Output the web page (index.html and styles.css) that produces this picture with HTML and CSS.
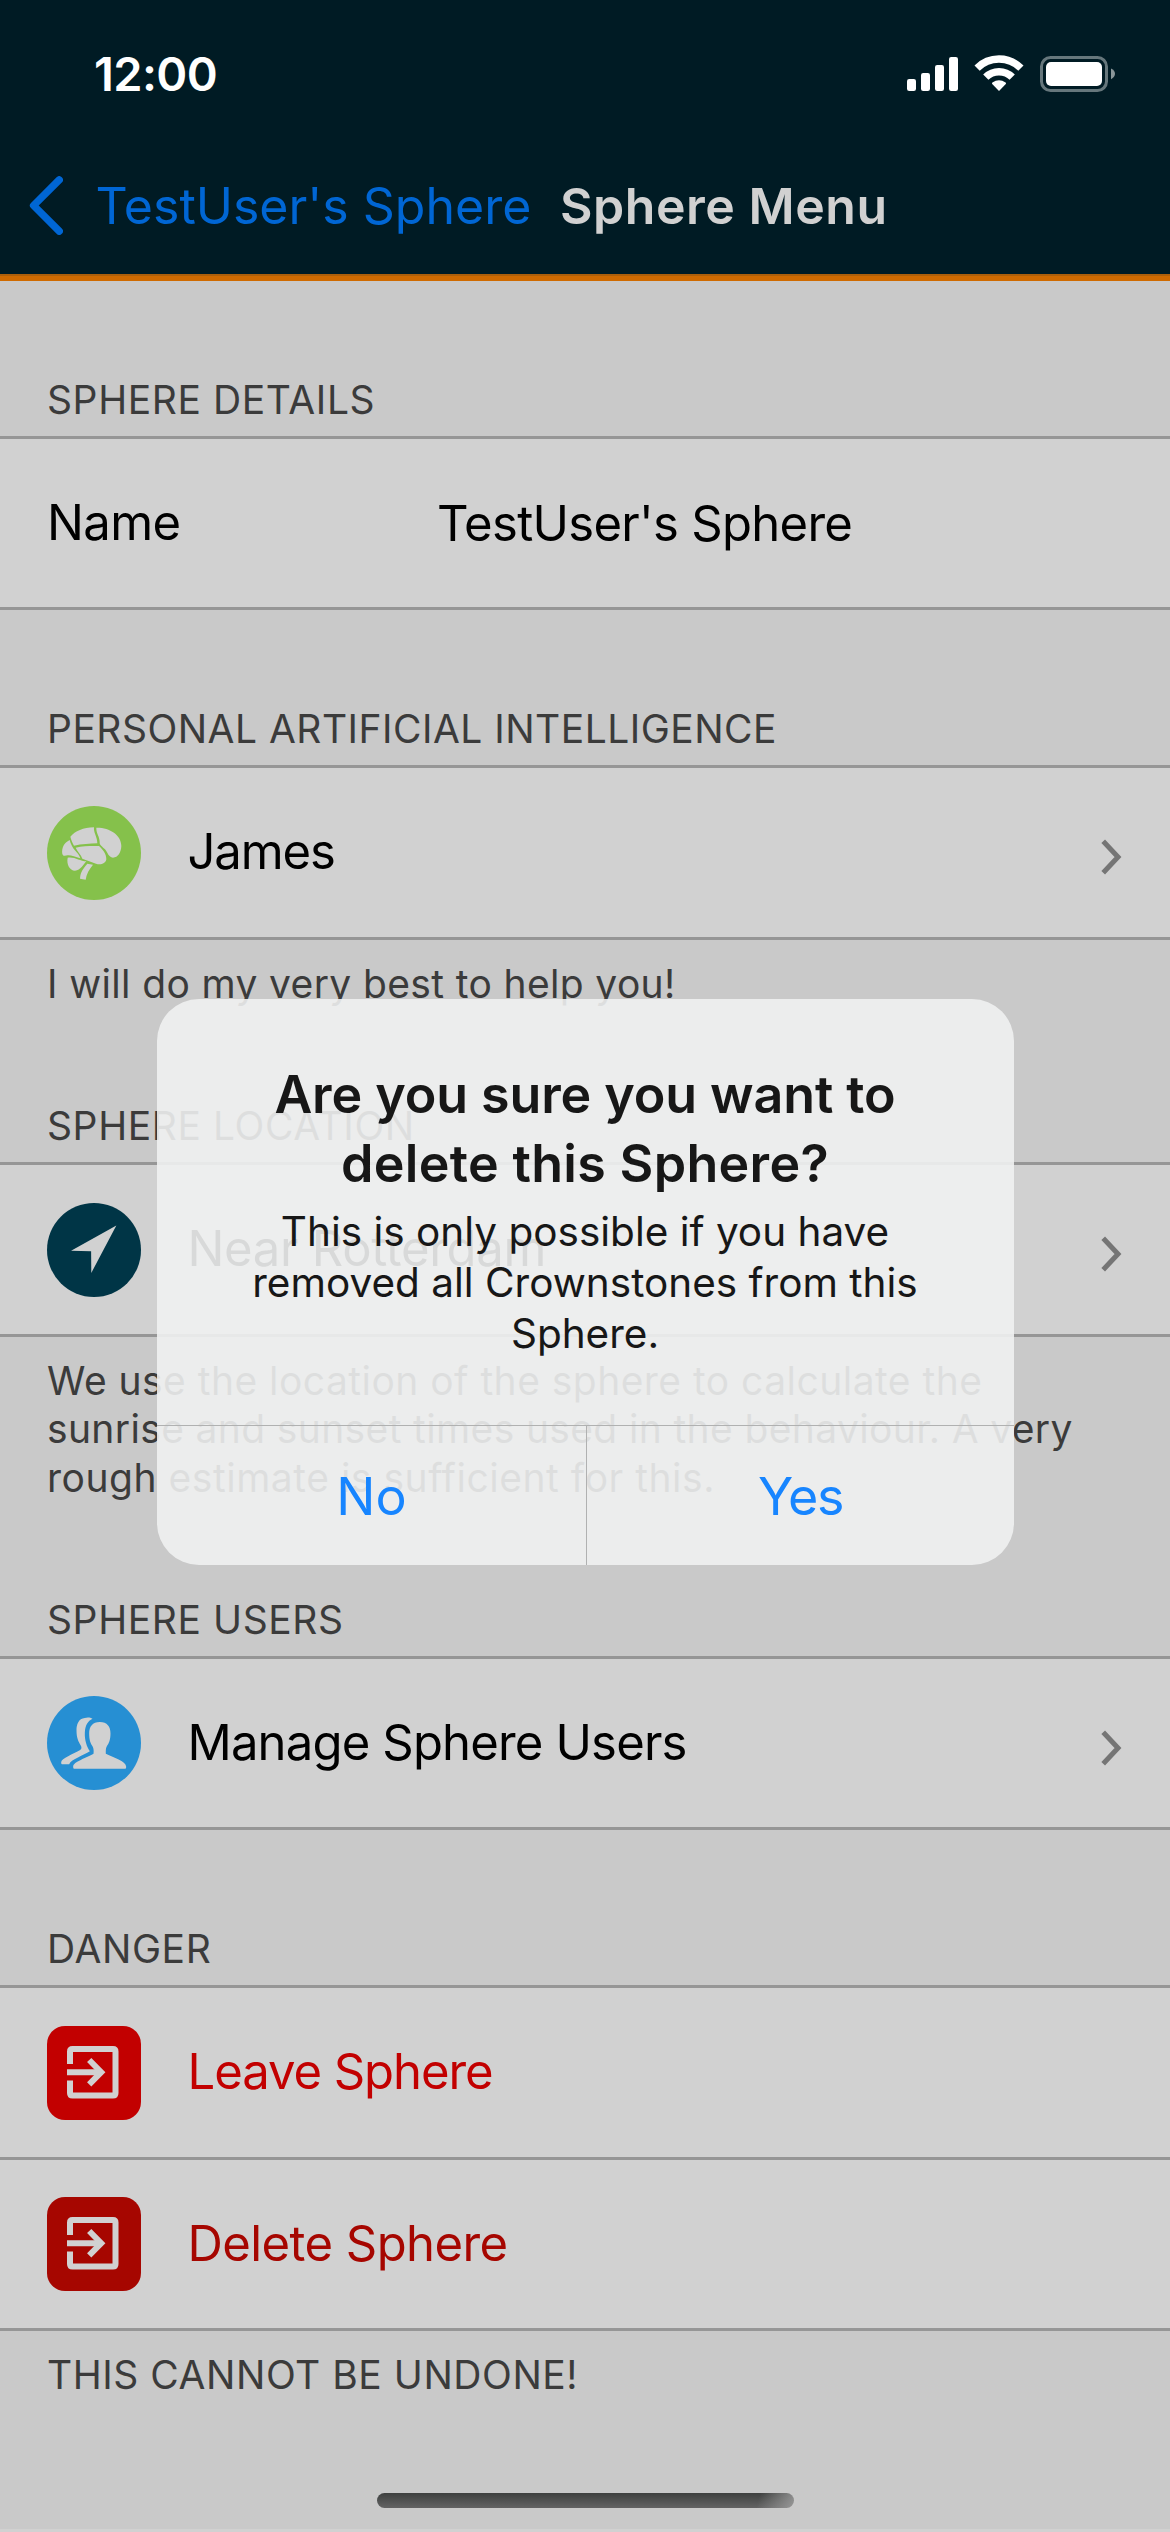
FILE: index.html
```html
<!DOCTYPE html>
<html lang="en">
<head>
<meta charset="utf-8">
<title>Sphere Menu</title>
<link rel="stylesheet" href="styles.css">
</head>
<body>
<div class="screen">
  <header class="header">
    <div class="status">
      <span class="status-time">12:00</span>
      <svg class="status-icons" viewBox="907 55 208 37" aria-hidden="true">
        <g fill="#fff">
          <rect x="907" y="79" width="9" height="12" rx="2.2"/>
          <rect x="921" y="73" width="9" height="18" rx="2.2"/>
          <rect x="935" y="65" width="9" height="26" rx="2.2"/>
          <rect x="949" y="57" width="9" height="34" rx="2.2"/>
          <path d="M999 91 L992.2 84 Q991.6 83.2 992.4 82.6 Q999 78 1005.6 82.6 Q1006.4 83.2 1005.8 84 Z"/>
          <rect x="1046" y="62" width="56" height="24" rx="5"/>
        </g>
        <g fill="none" stroke="#fff" stroke-width="7.4">
          <path d="M977.1 68.1 A31 31 0 0 1 1020.9 68.1"/>
          <path d="M985.8 77.2 A18.6 18.6 0 0 1 1012.2 77.2"/>
        </g>
        <rect x="1041.5" y="57.5" width="65" height="33" rx="9" fill="none" stroke="#66777c" stroke-width="3"/>
        <path d="M1111 68.5 Q1115 70.5 1115 73.8 Q1115 77 1111 79.2 Z" fill="#8a9699"/>
      </svg>
    </div>
    <nav class="nav">
      <svg class="nav-chevron" viewBox="0 0 34 59" aria-hidden="true"><path d="M30.2 3.9 L4.6 29.5 L30.2 55.1" fill="none" stroke="#0066d4" stroke-width="7.4" stroke-linecap="round" stroke-linejoin="round"/></svg>
      <span class="nav-back">TestUser's Sphere</span>
      <h1 class="nav-title">Sphere Menu</h1>
    </nav>
  </header>

  <main class="list">
    <h2 class="heading">SPHERE DETAILS</h2>
    <div class="rows">
      <div class="row">
        <span class="label name">Name</span>
        <span class="label value">TestUser's Sphere</span>
      </div>
    </div>

    <h2 class="heading ai">PERSONAL ARTIFICIAL INTELLIGENCE</h2>
    <div class="rows">
      <div class="row tall">
        <svg class="icon" viewBox="141 76 282 282" aria-hidden="true">
          <circle cx="282" cy="217" r="141" fill="#85c14b"/>
          <g fill="#d1d1d1">
            <path d="M211 168 C225 152 250 140 282 140 C280 156 292 168 292 188 C270 189 245 190 222 195 C218 187 213 177 211 168Z"/>
            <path d="M289 141 C328 140 364 162 364 196 C363 216 354 230 339 231 C325 230 323 215 315 206 C308 198 299 194 299 186 C300 168 288 158 289 141Z"/>
            <path d="M209 178 C212 190 218 202 226 210 C232 217 239 224 241 233 C226 229 213 223 203 224 C195 226 189 227 187 220 C184 203 192 186 209 178Z"/>
            <path d="M227 201 C250 195 280 196 297 196 C308 206 319 219 319 236 C317 250 300 254 288 249 C275 243 260 240 247 234 C243 222 232 212 227 201Z"/>
            <path d="M203 231 C225 228 240 242 259 242 C250 252 242 269 225 270 C209 270 199 250 203 231Z"/>
            <path d="M262 249 L279 252 C268 265 259 280 257 297 L240 294 C242 277 243 271 262 249Z"/>
          </g>
        </svg>
        <span class="label james">James</span>
        <svg class="chevron" viewBox="0 0 21 36" aria-hidden="true"><path d="M2.2 2.2 L17 18 L2.2 33.8" fill="none" stroke="#757575" stroke-width="5"/></svg>
      </div>
    </div>
    <p class="note note-ai">I will do my very best to help you!</p>

    <h2 class="heading">SPHERE LOCATION</h2>
    <div class="rows">
      <div class="row tall">
        <svg class="icon" viewBox="123.5 582 244 244" aria-hidden="true">
          <circle cx="245.5" cy="704" r="122" fill="#003546"/>
          <path d="M303.5 640.5 L186 706 L238 707 L238.5 763.5Z" fill="#d1d1d1"/>
        </svg>
        <span class="label near">Near Rotterdam</span>
        <svg class="chevron" viewBox="0 0 21 36" aria-hidden="true"><path d="M2.2 2.2 L17 18 L2.2 33.8" fill="none" stroke="#757575" stroke-width="5"/></svg>
      </div>
    </div>
    <p class="note note-location"><span class="line-first">We use the location of the sphere to calculate the</span><br>sunrise and sunset times used in the behaviour. A very<br><span class="line-last">rough estimate is sufficient for this.</span></p>

    <h2 class="heading">SPHERE USERS</h2>
    <div class="rows">
      <div class="row">
        <svg class="icon" viewBox="20.5 18 282 282" aria-hidden="true">
          <circle cx="161.5" cy="159" r="141" fill="#268fd3"/>
          <g fill="#d1d1d1">
            <path d="M179 96 C201 96 211 110 211 130 C211 150 206 160 200 169 C196 176 197 184 197 191 C222 204 258 213 258 230 C258 235 257 236 252 236 L105 236 C100 236 99 235 99 230 C99 214 140 204 160 191 C161 184 161 176 157 169 C151 160 147 150 147 130 C147 110 157 96 179 96Z"/>
            <path d="M157 86 C151 82 141 81 134 84 C115 86 109 103 109 121 C109 145 115 155 121 165 C125 172 125 177 120 180 C100 192 63 205 63 217 C63 222 64 223 68 223 L87 223 C94 207 130 197 149 184 C140 170 133 150 134 128 C135 105 143 93 157 86Z"/>
          </g>
        </svg>
        <span class="label manage">Manage Sphere Users</span>
        <svg class="chevron" viewBox="0 0 21 36" aria-hidden="true"><path d="M2.2 2.2 L17 18 L2.2 33.8" fill="none" stroke="#757575" stroke-width="5"/></svg>
      </div>
    </div>

    <h2 class="heading">DANGER</h2>
    <div class="rows">
      <div class="row tall">
        <svg class="icon" viewBox="0 0 94 94" aria-hidden="true">
          <rect width="94" height="94" rx="18" fill="#c20000"/>
          <g fill="none" stroke="#d1d1d1" stroke-width="6">
            <path d="M23 38 V25.5 Q23 23 25.5 23 H66 Q68.5 23 68.5 25.5 V67 Q68.5 69.5 66 69.5 H25.5 Q23 69.5 23 67 V54.5"/>
            <path d="M20 46.2 H54"/>
            <path d="M42.2 34 L54.2 46.2 L42.2 58.4"/>
          </g>
        </svg>
        <span class="label leave">Leave Sphere</span>
      </div>
      <div class="row">
        <svg class="icon" viewBox="0 0 94 94" aria-hidden="true">
          <rect width="94" height="94" rx="18" fill="#a60600"/>
          <g fill="none" stroke="#d1d1d1" stroke-width="6">
            <path d="M23 38 V25.5 Q23 23 25.5 23 H66 Q68.5 23 68.5 25.5 V67 Q68.5 69.5 66 69.5 H25.5 Q23 69.5 23 67 V54.5"/>
            <path d="M20 46.2 H54"/>
            <path d="M42.2 34 L54.2 46.2 L42.2 58.4"/>
          </g>
        </svg>
        <span class="label delete">Delete Sphere</span>
      </div>
    </div>
    <p class="note note-caps">THIS CANNOT BE UNDONE!</p>
  </main>

  <div class="overlay">
    <section class="dialog" role="alertdialog">
      <div class="dialog-body">
        <h2 class="dialog-title">Are you sure you want to<br><span class="wide">delete this Sphere?</span></h2>
        <p class="dialog-text">This is only possible if you have<br>removed all Crownstones from this<br>Sphere.</p>
      </div>
      <div class="dialog-actions">
        <button class="action" type="button">No</button>
        <button class="action" type="button">Yes</button>
      </div>
    </section>
  </div>
  <div class="home-indicator"></div>
</div>
</body>
</html>
```
FILE: styles.css
```css
* { box-sizing: border-box; margin: 0; padding: 0; }

body { background: #c9c9c9; font-family: Inter, "Liberation Sans", sans-serif; }

.screen {
  position: relative;
  display: flex;
  flex-direction: column;
  width: 1170px;
  height: 2532px;
  overflow: hidden;
  background: #c9c9c9;
  border-bottom: 3px solid #d1d1d1;
}

/* Header */
.header {
  height: 281px;
  flex: none;
  background: #001b24;
  border-bottom: 5px solid #cf6a00;
  box-shadow: inset 0 -2px 0 #ad5f0a;
}

.status {
  display: flex;
  justify-content: space-between;
  align-items: flex-start;
  height: 176px;
  padding: 44px 55px 0 94px;
}

.status-time {
  font-size: 47px;
  font-weight: 600;
  line-height: 60px;
  letter-spacing: -0.6px;
  color: #fff;
}

.status-icons { width: 208px; height: 37px; margin-top: 11px; }

.nav {
  display: flex;
  align-items: flex-start;
  padding-left: 29px;
  line-height: 60px;
  font-size: 50px;
}

.nav-chevron { width: 34px; height: 59px; margin-right: 32.5px; }
.nav-back { width: 464.5px; color: #0066d4; white-space: nowrap; }
.nav-title {
  font-size: 50px;
  font-weight: 600;
  letter-spacing: 0.54px;
  color: #d1d1d1;
}

/* Settings list */
.heading {
  height: 155px;
  padding: 96px 0 0 47px;
  font-size: 39px;
  font-weight: 400;
  line-height: 46px;
  letter-spacing: 0.6px;
  color: #3b3b3b;
}
.heading.ai { letter-spacing: 0.48px; }

.rows { border-top: 3px solid #969696; }

.row {
  display: flex;
  align-items: center;
  height: 171px;
  padding: 0 48px 0 47px;
  background: #d1d1d1;
  border-bottom: 3px solid #969696;
}
.row.tall { height: 172px; }

.icon { flex: none; width: 94px; height: 94px; margin-right: 46.5px; }
.chevron { flex: none; width: 21px; height: 36px; margin: 9px 0 0 auto; }

.label { font-size: 49px; line-height: 60px; color: #000; white-space: nowrap; margin-top: -1px; }
.name { width: 390px; letter-spacing: -0.62px; }
.value { letter-spacing: -0.7px; margin-top: 1px; }
.james { letter-spacing: -1.1px; }
.near { letter-spacing: -0.31px; }
.manage { letter-spacing: -0.83px; }
.leave { letter-spacing: -1.05px; color: #c20000; }
.delete { letter-spacing: -0.57px; color: #a60600; }

.note {
  padding: 20px 0 0 47px;
  font-size: 39px;
  line-height: 48.4px;
  letter-spacing: 0.36px;
  color: #3b3b3b;
  white-space: nowrap;
}
.note-ai { height: 67px; }
.note-location { height: 164px; letter-spacing: 0.36px; }
.line-first { letter-spacing: 0.46px; }
.line-last { letter-spacing: 0.52px; }
.note-caps { letter-spacing: 0.54px; }

/* Confirmation dialog */
.overlay {
  position: absolute;
  inset: 0;
  display: flex;
  justify-content: center;
  align-items: flex-start;
  padding-top: 999px;
}

.dialog {
  width: 857px;
  height: 566px;
  border-radius: 42px;
  overflow: hidden;
  background: rgba(240, 241, 241, 0.9);
  color: #171717;
  text-align: center;
}

.dialog-body { height: 427px; padding-top: 60.5px; border-bottom: 1px solid #b0b1b1; }

.dialog-title { font-size: 52px; font-weight: 600; line-height: 69.7px; letter-spacing: -0.1px; }
.dialog-title .wide { letter-spacing: 0.31px; }

.dialog-text { margin-top: 8.5px; font-size: 40.5px; line-height: 50.7px; }

.dialog-actions { display: grid; grid-template-columns: 430px 1fr; height: 139px; }

.action {
  border: 0;
  padding: 2px 0 0 1px;
  background: none;
  font: 400 52px/1 Inter, "Liberation Sans", sans-serif;
  color: #1785ff;
}
.action + .action { letter-spacing: -1.3px; }
.action:first-child { border-right: 1px solid #b0b1b1; }

.home-indicator {
  position: absolute;
  left: 377px;
  top: 2493px;
  width: 417px;
  height: 15px;
  border-radius: 8px;
  background:
    linear-gradient(105deg, rgba(160, 160, 160, 0) 91%, rgba(160, 160, 160, 0.85) 100%),
    linear-gradient(#3e403f, #636363);
}
```
